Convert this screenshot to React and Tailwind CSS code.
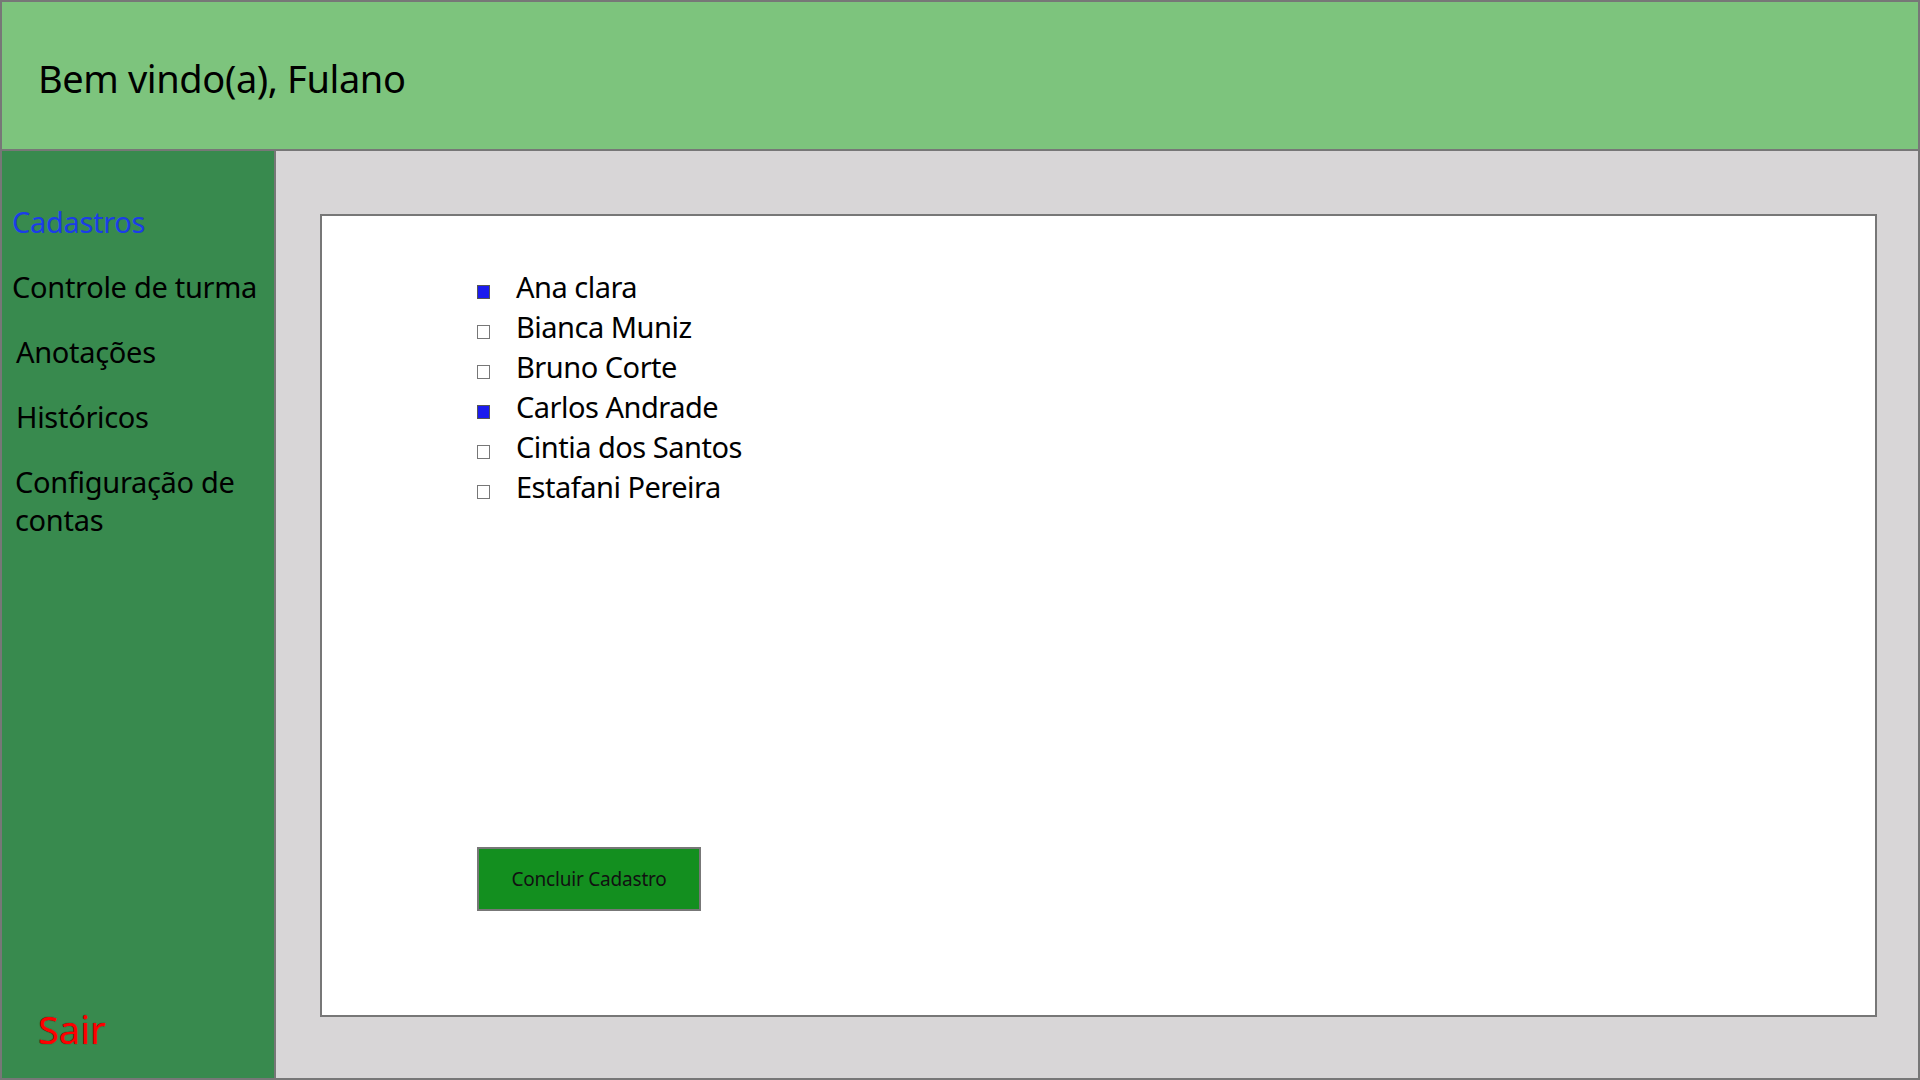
const alunos = [
  { nome: 'Ana clara', marcado: true },
  { nome: 'Bianca Muniz', marcado: false },
  { nome: 'Bruno Corte', marcado: false },
  { nome: 'Carlos Andrade', marcado: true },
  { nome: 'Cintia dos Santos', marcado: false },
  { nome: 'Estafani Pereira', marcado: false },
];

function App() {
  return (
    <div className="w-[1920px] h-[1080px] flex flex-col border-2 border-[#777] font-['Noto_Sans',sans-serif] text-black overflow-hidden">
      {/* Header */}
      <header className="h-[149px] shrink-0 bg-[#7dc47d] border-b-2 border-[#777] flex items-center pl-[36px] pt-[4px]">
        <h1 className="text-[38px] leading-none tracking-[-0.4px]">Bem vindo(a), Fulano</h1>
      </header>

      <div className="flex flex-1 min-h-0">
        {/* Sidebar */}
        <aside className="w-[274px] shrink-0 bg-[#388a4e] border-r-2 border-[#777] flex flex-col justify-between">
          <nav className="flex flex-col pt-[52px] text-[29px] leading-[38px] tracking-[-0.3px]">
            <a className="pl-[10px] text-[#1b3de8] cursor-pointer">Cadastros</a>
            <a className="pl-[10px] mt-[27px] cursor-pointer">Controle de turma</a>
            <a className="pl-[14px] mt-[27px] cursor-pointer">Anotações</a>
            <a className="pl-[14px] mt-[27px] cursor-pointer">Históricos</a>
            <a className="pl-[13px] mt-[27px] cursor-pointer">Configuração de<br />contas</a>
          </nav>
          <button className="text-left pl-[36px] pb-[30px] text-[38px] leading-none text-[#f00] [text-shadow:0_0_1px_#400]">
            Sair
          </button>
        </aside>

        {/* Main */}
        <main className="flex-1 bg-[#d8d6d7] pl-[44px] pr-[41px] pt-[63px] pb-[61px]">
          <section className="h-full bg-white border-2 border-[#777] pl-[155px] pt-[50px] flex flex-col">
            <ul className="flex flex-col">
              {alunos.map((a) => (
                <li key={a.nome} className="flex items-center h-[40px]">
                  <span
                    className={
                      a.marcado
                        ? 'w-[13px] h-[14px] mt-[12px] bg-[#1b1bee] border border-[#555]'
                        : 'w-[13px] h-[14px] mt-[12px] bg-white border border-[#777]'
                    }
                  />
                  <span className="ml-[26px] text-[29px] leading-none tracking-[-0.5px]">{a.nome}</span>
                </li>
              ))}
            </ul>
            <button className="mt-[341px] w-[224px] h-[64px] bg-[#138f1f] border-2 border-[#777] text-[19px] text-[#111] tracking-[-0.2px]">
              Concluir Cadastro
            </button>
          </section>
        </main>
      </div>
    </div>
  );
}

export default App;
